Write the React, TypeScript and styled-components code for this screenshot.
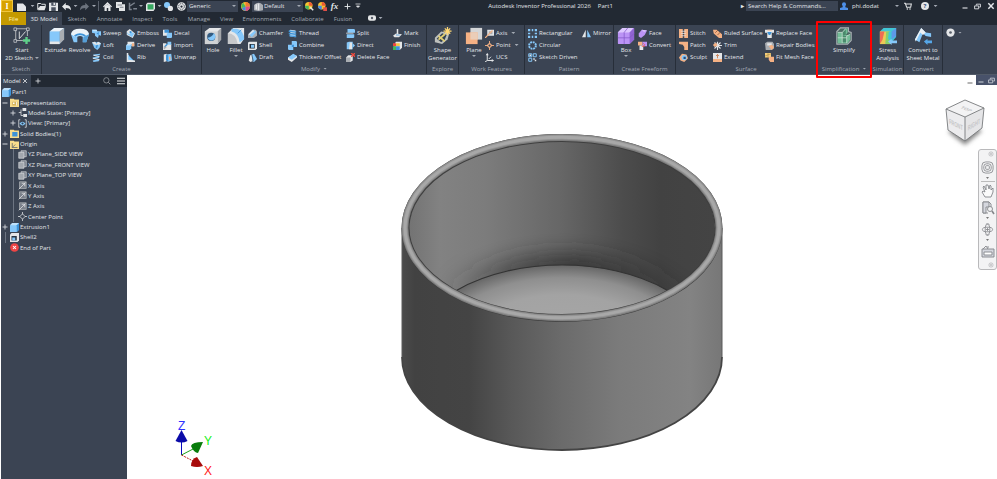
import React from "react";
import styled, { createGlobalStyle } from "styled-components";

const color = {
  bar: "#222933",
  panel: "#3b4453",
  line: "#272e39",
  edge: "#515a68",
  text: "#e3e6ea",
  dim: "#a3a9b3",
  blue: "#86c8fa",
  deep: "#3d93d8",
  white: "#e4e6e8",
  grey: "#a9adb2",
  orange: "#f5b184",
  purple: "#bb93f5",
  green: "#5fd08a",
};

const GlobalStyle = createGlobalStyle`
  * { box-sizing: border-box; }
  body { margin: 0; background: #fff; font-family: "Open Sans", "Noto Sans", sans-serif; font-size: 6px; line-height: 8px; color: ${color.text}; }
  button, input, select { font: inherit; color: inherit; border: 0; padding: 0; margin: 0; background: none; }
  ul { list-style: none; margin: 0; padding: 0; }
  svg { display: block; flex: none; }
`;

/* ---------- icons ---------- */

const { blue: B, deep: D, white: W, grey: G, orange: O, purple: P } = color;

const small: Record<string, React.ReactNode> = {
  sweep: <><path d="M0 1h6l1 2h5v6l-3-1-1 4-4-3V6L0 5z" fill={B} /><path d="M0 1h6l1 2H2z" fill="#c5e5fd" /><path d="M6 6l3-2v4z" fill={D} /></>,
  loft: <><path d="M0 2l4-1 2 1 2-1 4 2-2 6-3 3-4-3z" fill={B} /><path d="M0 2l4-1 2 3 2-3 4 2-3 2H4z" fill={W} /><path d="M5 6l3-1-1 4-2 1z" fill={D} /></>,
  coil: <><path d="M2 2l9-1-1 2-8 1zM1 6l9-2-1 3-7 1zM1 10l9-2-1 3-7 1z" fill={B} /><path d="M2 3l8 2M1 7l9 2" stroke={W} strokeWidth="1.200" /></>,
  emboss: <><path d="M1 3l4-3 7 6-3 6-8-4z" fill={W} /><path d="M1 4l3 3 3-3 4 2-3 5-6-4z" fill={B} /><circle cx="6" cy="4" r="1.500" fill={D} /></>,
  derive: <><path d="M2 1h9v6H7V4H2z" fill={W} /><path d="M0 6l2-2h5v6l-2 2H0z" fill={B} /><path d="M2 4h5l-2 2H0z" fill="#c5e5fd" /><path d="M8 3h3v4H8z" fill={O} /></>,
  rib: <><path d="M2 1v10h9z" fill={B} /><path d="M1 0h2v9l9 1v2H1z" fill={W} /><path d="M4 4l5 5" stroke={D} /></>,
  decal: <><path d="M0 1h7v8H0z" fill={W} /><path d="M2 1h6v4H2z" fill={D} /><path d="M5 6l2-1h5v6l-1 1H5z" fill={B} /></>,
  importFile: <><path d="M0 3h4l1 1h6v8H0z" fill={W} /><path d="M2 8l4-4" stroke={D} strokeWidth="2" /><path d="M6 1h5v4H6z" fill={B} /><path d="M1 7l4 1-3 3H1z" fill={G} /></>,
  unwrap: <><path d="M1 2l4-1v10l-4 1z" fill={W} /><path d="M5 2l6-1 1 9-6 2z" fill={B} /><path d="M4 2l3 1v8l-3-1z" fill={D} /><path d="M8 5h2v4H8z" fill={O} /></>,
  chamfer: <><path d="M0 7l6-6h4l2 2v6l-4 3H0z" fill={G} /><path d="M1 7l6-6 4 3-6 7z" fill={B} /><path d="M1 7l6-6 1 2-6 5z" fill={W} /></>,
  shell: <><path d="M0 2l2-1h10v9l-2 2H0z" fill={W} /><path d="M2 4h7v6H2z" fill="#263342" /><path d="M4 5h4v4H4z" fill={B} /></>,
  draft: <><path d="M1 10l2-7 3-1v9l-3 1z" fill={W} /><path d="M5 2l3-1 4 7-4 4-2-1z" fill={B} /><path d="M5 2l2 9" stroke="#29415a" /></>,
  thread: <><path d="M3 1l7 1v9l-7-1z" fill={W} /><path d="M1 3l10 1M1 6l10 1M2 9l9 1" stroke={D} strokeWidth="2" /><path d="M2 2l8 1M2 8l8 1" stroke={B} /></>,
  combine: <><path d="M5 0h6l1 1v7H5z" fill={B} /><path d="M0 5h7v7H1l-1-1z" fill={B} /><path d="M5 5h3v3H5z" fill={D} /></>,
  thicken: <><path d="M0 6l7-4 5 2v2l-7 6-5-3z" fill={W} /><path d="M0 6l7-5 5 3-7 5z" fill={B} /></>,
  split: <><path d="M2 0h9l1 1v4H2z" fill={B} /><path d="M1 7h10v4l-1 1H1z" fill={B} /><path d="M0 5h10v1H0z" fill={W} /></>,
  direct: <><path d="M1 2l3-1h5v10H1z" fill={B} /><path d="M5 2h3v9H4z" fill={W} /><path d="M9 3l3 3-3 3z" fill={B} /></>,
  deleteFace: <><path d="M0 6l3-3h6v7l-3 2H0z" fill={W} /><path d="M0 6h6v6H0z" fill={G} /><path d="M7 0l5 5M12 0L7 5" stroke="#f04a3e" strokeWidth="1.800" /></>,
  mark: <><path d="M5 0h2v7H5z" fill={W} /><path d="M0 9l4-3 8 1-4 4H2z" fill={W} /><path d="M4 8h5" stroke={D} /></>,
  finish: <><path d="M4 1h8v8l-3 3H2V4z" fill={W} /><path d="M0 3h4v4H0z" fill="#f0443e" /><path d="M4 3h5v4H4z" fill="#f2c545" /><path d="M0 7h4v5H0z" fill="#44b65b" /><path d="M4 7h5v5H4z" fill="#3c91e0" /></>,
  axis: <><path d="M3 1h9v8H3z" fill={W} /><path d="M5 3h5v4H5z" fill={G} /><path d="M0 12L10 2" stroke={O} strokeWidth="1.600" /></>,
  point: <><path d="M6 0v12M0 6h12" stroke={O} strokeWidth="1.200" /><path d="M6 2l4 4-4 4-4-4z" fill={O} /><circle cx="6" cy="6" r="1.500" fill={color.panel} /></>,
  ucs: <><path d="M3 1v9h8M3 10L0 12M5 8l3-3" stroke={W} strokeWidth="1.300" fill="none" /><path d="M1 3l2-3 2 3M9 8l3 2-3 2" fill={W} /></>,
  rect: <path d="M0 0h3v3H0zM5 0h2v3H5zM9 0h3v3H9zM0 5h3v2H0zM9 5h3v2H9zM0 9h3v3H0zM5 9h2v3H5zM9 9h3v3H9z" fill={B} />,
  circular: <circle cx="6" cy="6" r="4.500" stroke={B} strokeWidth="2.600" strokeDasharray="2.500 1" fill="none" />,
  driven: <><path d="M1 1h4v4H1zM7 1h4v4H7zM1 7h4v4H1z" stroke={B} strokeWidth="1.300" fill="none" /><path d="M7 7h2v2H7zM9 9h2v2H9zM2 2h2v2H2z" fill={W} /></>,
  mirror: <><path d="M5 1v10H0z" fill={W} /><path d="M7 1v10h5z" fill={B} /></>,
  face: <><path d="M1 6l4-5 7 1-3 6-5 4-3-2z" fill={P} /><path d="M5 1l7 1-4 2z" fill="#d9c3fb" /></>,
  convert: <><path d="M0 1h6v5H0z" fill={O} /><path d="M6 1h6v6H6z" fill={P} /><path d="M2 6h5v6H2z" fill={W} /><path d="M7 3l2 2-2 2M5 7h4" stroke="#ef5141" fill="none" /></>,
  stitch: <><path d="M0 0h5v12H0zM7 0h5v12H7z" fill={O} /><path d="M3 3h6M3 6h6M3 9h6" stroke={W} /></>,
  patch: <path d="M0 1h12v11H7V8L5 5 0 4z" fill={O} />,
  sculpt: <><path d="M0 6l4-5 6 1 2 5-5 5-5-2z" fill={O} /><circle cx="7" cy="6" r="3.500" fill={B} /><path d="M6 5h3v3H6z" fill="#2c4a78" /></>,
  ruled: <><path d="M0 1h5l7 6v5H8L1 6z" fill={O} /><path d="M3 5l4-4M6 8l4-4" stroke="#7d5138" /></>,
  trim: <><path d="M6 1v11M1 6h11M2 2l8 8M10 2l-8 8" stroke={W} strokeWidth="1.500" /><path d="M0 5l4-3 2 4-4 2z" fill={O} /></>,
  extend: <><path d="M0 0h12v8H0z" fill={W} /><path d="M0 8h12v4H0z" fill={O} /><path d="M6 2v5M4 4l2-2 2 2" stroke="#c96c38" fill="none" /></>,
  replace: <><path d="M0 1h12v4H9v7H3V5H0z" fill={W} /><path d="M3 4h6L7 8H5z" fill={D} /><path d="M3 1h6v1H3z" fill={O} /></>,
  repair: <><path d="M0 3l3-2h7l2 3v6l-3 2H1z" fill={G} /><path d="M3 3h6v3H3z" fill={W} /><path d="M5 7l4-2 3 3-3 4z" fill={O} /></>,
  mesh: <><path d="M0 0h8v6H0z" fill="#f3ce79" /><path d="M5 5h7v7H7L5 9z" fill={O} /><path d="M0 4l8-3M4 0v6" stroke="#8e6d37" strokeWidth=".6" /></>,
  newFile: <path d="M0 2h8l4 4v6H0z" fill={W} />,
  open: <><path d="M1 2h4l1 1h5v3H4l-3 4z" fill="none" stroke={W} strokeWidth="1.300" /><path d="M4 6h8l-2 5H1z" fill={W} /></>,
  save: <><path d="M0 1h12v11H0z" fill={W} /><path d="M3 1h6v4H3zM3 7h6v5H3z" fill="#4a5260" /><path d="M6 1h2v3H6z" fill={W} /></>,
  undo: <path d="M0 6l5-5v3q7 0 7 7-2-3-7-3v3z" fill={W} />,
  redo: <path d="M12 6L7 1v3Q0 4 0 11q2-3 7-3v3z" fill="#6b727d" />,
  home: <><path d="M0 6l6-6 6 6-1 1-5-4-5 4z" fill={W} /><path d="M2 6l4-3 4 3v6H7V8H5v4H2z" fill={W} /></>,
  sheets: <><path d="M0 0h8v3h4v9H4V8H0z" fill={W} /><path d="M2 4h6M5 7h5" stroke="#59606b" /></>,
  branch: <path d="M2 1v9h3M3 5l6-4M7 9h5" stroke="#7b828d" strokeWidth="2" fill="none" />,
  region: <><path d="M0 3l2-2h10v8l-2 3H0z" fill={W} /><path d="M2 3h8v7H2z" fill="#36a860" /></>,
  spheres: <><circle cx="4" cy="4" r="4" fill={B} /><circle cx="8.500" cy="8.500" r="3.500" fill={W} /></>,
  gear: <><circle cx="6" cy="6" r="5.800" fill={W} /><circle cx="6" cy="6" r="3.800" fill="none" stroke={color.bar} strokeDasharray="2 1" /><circle cx="6" cy="6" r="1.500" fill={color.bar} /></>,
  wheel: <><circle cx="6" cy="6" r="6" fill="#f4c430" /><path d="M6 6V0a6 6 0 0 1 6 6z" fill="#ee7b36" /><path d="M6 6h6a6 6 0 0 1-6 6z" fill="#d84c8d" /><path d="M6 6v6A6 6 0 0 1 1 8z" fill="#4389e8" /><path d="M6 6L1 8a6 6 0 0 1 2-7z" fill="#46b85e" /></>,
  cylinder: <><path d="M0 4q6-6 12 0v7q-6 2-12 0z" fill={G} /><path d="M3 3v7M6 2v9" stroke={W} strokeWidth="2" /></>,
  wheelX: <><circle cx="5" cy="5" r="5" fill="#f4c430" /><path d="M5 5V0a5 5 0 0 1 5 5z" fill="#ee5b36" /><path d="M5 5v5a5 5 0 0 1-5-5z" fill="#4389e8" /><path d="M7 7h5v5H7z" fill="#e05048" /></>,
  wheelPick: <><circle cx="5" cy="5" r="5" fill="#f4c430" /><path d="M5 5V0a5 5 0 0 1 5 5z" fill="#ee5b36" /><path d="M5 5v5a5 5 0 0 1-5-5z" fill="#46b85e" /><path d="M7 7l4 4" stroke={W} strokeWidth="2" /></>,
  plus: <path d="M6 1v10M1 6h10" stroke="currentColor" strokeWidth="1.600" />,
  minus: <path d="M1 6h10" stroke="currentColor" strokeWidth="1.800" />,
  menuDown: <path d="M1 2h10M3 6h6L6 9z" stroke={W} strokeWidth="1.500" fill={W} />,
  user: <><circle cx="6" cy="3.500" r="3" fill="#4d8fe8" /><path d="M4 5h4v3l4 1v3H0V9l4-1z" fill="#4d8fe8" /></>,
  cart: <><path d="M0 2h2l2 6h6l1-5H3" stroke={W} strokeWidth="1.600" fill="none" /><circle cx="5" cy="10.500" r="1.200" fill={W} /><circle cx="9" cy="10.500" r="1.200" fill={W} /></>,
  minimize: <path d="M1 10h10" stroke="currentColor" strokeWidth="2.200" />,
  restore: <path d="M4 4V2h7v5H9M1 5h7v5H1z" stroke="currentColor" strokeWidth="1.500" fill="none" />,
  close: <path d="M2 2l8 8M10 2l-8 8" stroke="currentColor" strokeWidth="2.200" />,
  thinClose: <path d="M2 2l8 8M10 2l-8 8" stroke="currentColor" strokeWidth="1.600" />,
  search: <><circle cx="5" cy="5" r="4" stroke={G} fill="none" /><path d="M8 8l3 3" stroke={G} strokeWidth="1.200" /></>,
  burger: <path d="M0 2h12M0 6h12M0 10h12" stroke={W} strokeWidth="1.600" />,
  part: <><path d="M0 3l3-3h9v9l-3 3H0z" fill={B} /><path d="M0 3l3-3h9L9 3z" fill="#bfe1fb" /><path d="M9 3l3-3v9l-3 3z" fill={D} /></>,
  folder: <><path d="M0 1h5l1 1h6v10H0z" fill="#f7dc8c" /><path d="M3 5h7v5H3z" fill="#d3b35d" /><path d="M4 6h2v2H4zM8 5h1v5H8z" fill="#fff" /></>,
  solids: <><path d="M0 1h5l1 1h6v10H0z" fill="#f7dc8c" /><path d="M3 4h7v6H3z" fill={D} /></>,
  origin: <><path d="M0 1h5l1 1h6v10H0z" fill="#f7dc8c" /><path d="M3 4v6h7M3 10l4-4" stroke="#55616d" fill="none" /></>,
  state: <><path d="M4 2v8h3M1 6h3" stroke={W} fill="none" /><path d="M6 0h5v4H6zM7 8h5v4H7z" fill={W} /></>,
  view: <><path d="M3 1H1v10h2M9 1h2v10H9" stroke={W} fill="none" /><path d="M2 6q4-5 8 0q-4 5-8 0" fill={B} /><circle cx="6" cy="6" r="1.400" fill="#2e4055" /></>,
  plane: <><path d="M4 1h7v8H4z" fill="#777e89" stroke={W} strokeWidth=".8" /><path d="M1 3h7v8H1z" fill="#a2a7ae" stroke={W} strokeWidth=".8" /></>,
  treeAxis: <><path d="M2 1h9v9H2z" fill="#7b818b" stroke={G} /><path d="M1 11l9-9M5 3h4v4" stroke={W} fill="none" /></>,
  center: <><path d="M6 0v12M0 6h12" stroke={W} /><path d="M6 2.500L9.500 6 6 9.500 2.500 6z" fill={color.panel} stroke={W} /></>,
  shellTree: <><path d="M0 2l2-2h10v10l-2 2H0z" fill={W} /><path d="M2 4h7v6H2z" fill="#263342" /><path d="M3 6h4v4H3z" fill={B} /></>,
  end: <><circle cx="6" cy="6" r="5.800" fill="#ef4444" /><path d="M4 4l4 4M8 4L4 8" stroke="#fff" strokeWidth="1.400" /></>,
  more: <><circle cx="6" cy="6" r="5.500" fill={W} /><circle cx="6" cy="6" r="1.800" fill="#59606b" /></>,
  tabMenu: <><rect x="0" y="2" width="12" height="8" rx="3" fill={W} /><circle cx="6" cy="6" r="1.800" fill="#59606b" /></>,
};

const large: Record<string, React.ReactNode> = {
  sketch: <><path d="M3 2h13M3 2v13M16 2v8M3 15h8" stroke={G} strokeWidth="1.200" fill="none" /><path d="M1 1h3v3H1zM15 1h3v3h-3zM1 14h3v3H1z" fill={color.panel} stroke={W} strokeWidth=".7" /><path d="M7 13L14 5M7 5v8" stroke={W} fill="none" /><path d="M15 11v8M11 15h8" stroke={color.green} strokeWidth="2.600" /></>,
  extrude: <><path d="M3 5l5-4h11v12l-5 6H3z" fill="#56a7e8" /><path d="M3 5h11v11H3z" fill={B} /><path d="M3 5l5-4h11l-5 4z" fill="#eef3f7" /><path d="M14 5l5-4v13l-5 5z" fill={G} /><path d="M3 16h11v3H3z" fill={W} /></>,
  revolve: <><path d="M0 8q1-5 10-5t10 5l-3 9h-4v-6q-3-2-6 0v6H3z" fill={B} /><path d="M0 8q1-6 10-6t10 6l-5 3q-5-3-10 0z" fill="#ecf3f8" /><path d="M4 10q6-4 12 0" stroke={D} fill="none" strokeWidth="2" /><path d="M14 11l6-3-3 9h-4z" fill="#559fd8" /></>,
  hole: <><path d="M1 5l5-4h13v13l-4 5H1z" fill={W} /><path d="M15 5l4-4v13l-4 5z" fill="#a3a6aa" /><path d="M1 5h14v14H1z" fill="#d0d2d4" /><circle cx="8" cy="11" r="4.500" fill="#335b80" /><path d="M4 12q5-1 7-5a4.500 4.500 0 1 1-7 5" fill={B} /></>,
  fillet: <><path d="M1 7l6-6h12v12l-4 6H1z" fill={W} /><path d="M1 7q9 0 11 12H1z" fill="#c5c7ca" /><path d="M5 2h6q8 2 8 12l-5 3Q13 7 5 5z" fill={B} /><path d="M12 7l4-4" stroke={D} /></>,
  shape: <><path d="M1 12l7-7 9 2-2 7-6 5-8-2z" fill="#bdc0bd" /><path d="M3 13l6-6 5 2-2 5-4 3z" fill="#344253" /><path d="M5 14l7-6M5 10l7 6" stroke="#e3cf73" strokeWidth="2" /><path d="M15 0v9M10.500 4.500h9M12 1.500l6 6M18 1.500l-6 6" stroke="#ffd774" strokeWidth="1.400" /></>,
  planeBig: <><path d="M6 1h13v13H6z" fill="#d5d6d8" /><path d="M1 6h13v13H1z" fill={O} /><path d="M6 6h8v8H6z" fill="#ebcdb8" /></>,
  box: <><path d="M1 6q0-1 5-5h12q1 0 1 1v12l-5 5H2q-1 0-1-1z" fill={P} /><path d="M1 6l5-5h12l-4 5z" fill="#ddc8ff" /><path d="M14 6l5-5v13l-5 5z" fill="#9064d2" /><path d="M8 6v13M1 12h13l5-5M8 6l4-5" stroke="#8358c8" strokeWidth=".8" fill="none" /></>,
  simplify: <><path d="M2 5l4-4h9v4l3 1v9l-4 4H2z" fill="#4b6b63" stroke="#aab2b6" strokeWidth="1.200" /><path d="M3 6h5l3-4h3v4l-2 3h5v5l-3 4H3z" fill="#74bd98" /><path d="M8 6l4-4v7l-4 1zM8 10h5v7H8z" fill="#4a8a6c" /><path d="M3 6h5v12M3 12h10M13 10v8M8 6l4-4M13 10l4-2" stroke="#cfe6da" strokeWidth=".8" fill="none" /></>,
  stress: <><path d="M1 5l4-4h14v10l-5 6H1z" fill="#41c7d6" /><path d="M1 5h12v14H1z" fill="#edca56" /><path d="M1 5h5l-2 9-3 5z" fill="#ee6c55" /><path d="M8 5h5v14H7z" fill="#87d16b" /><path d="M11 5h3v12l-4-4z" fill="#41c7d6" /><path d="M14 5l5-4v9l-5 4z" fill="#5e99e9" /><path d="M10 16l4-3v2h6v3h-6v2z" fill={B} /></>,
  sheet: <><path d="M1 14L8 1l5 5 6 1v4l-6-1-3-3-4 10z" fill={B} /><path d="M8 1l5 5-3 3-3-3-5 10-1-2z" fill="#eef1f3" /><path d="M11 16l4-3v2h5v3h-5v2z" fill="#56a7e8" /></>,
};

function Icon({ name, size = 9 }: { name: string; size?: number }) {
  return <svg width={size} height={size} viewBox="0 0 12 12" aria-hidden="true">{small[name]}</svg>;
}
function LargeIcon({ name }: { name: string }) {
  return <svg width="18" height="18" viewBox="0 0 20 20" aria-hidden="true">{large[name]}</svg>;
}
const Caret = styled.i`
  flex: none;
  width: 4px;
  height: 2px;
  background: ${color.dim};
  clip-path: polygon(0 0, 100% 0, 50% 100%);
`;

/* ---------- frame ---------- */

const Window = styled.div`
  display: flex;
  flex-direction: column;
  min-height: 100vh;
  padding-left: 1px;
`;
const TitleBar = styled.header`
  display: flex;
  align-items: center;
  height: 12px;
  background: ${color.bar};
`;
const AppButton = styled.button`
  width: 12px;
  height: 12px;
  background: #d8a200;
  border: 1px solid #f0c53d;
  color: #fff;
  font-family: "Liberation Serif", serif;
  font-size: 8px;
  line-height: 9px;
  font-weight: 700;
`;
const IconButton = styled.button<{ $w: number }>`
  display: flex;
  align-items: center;
  justify-content: center;
  gap: 3px;
  flex: none;
  width: ${(p) => p.$w}px;
  height: 12px;
  font-weight: 700;
`;
const FormulaMark = styled.em`
  font-family: "Liberation Serif", serif;
  font-size: 9px;
`;
const BarRule = styled.span`
  width: 1px;
  height: 10px;
  margin: 0 1px;
  background: #5a616c;
`;
const Picker = styled.label<{ $w: number }>`
  display: flex;
  align-items: center;
  gap: 1px;
  flex: none;
  width: ${(p) => p.$w}px;
  height: 11px;
  padding: 0 2px;
  background: ${color.panel};
`;
const PickerSelect = styled.select`
  appearance: none;
  flex: 1;
  min-width: 0;
`;
const Title = styled.h1`
  flex: 1;
  display: flex;
  justify-content: center;
  gap: 7px;
  margin: 0;
  font-size: 6px;
  font-weight: 400;
  white-space: nowrap;
`;
const SearchBox = styled.input`
  width: 92px;
  height: 10px;
  padding: 0 2px;
  background: ${color.panel};
  &::placeholder { color: ${color.text}; opacity: 1; }
`;
const UserButton = styled.button`
  display: flex;
  align-items: center;
  gap: 4px;
  width: 61px;
  padding-left: 2px;
  & > ${Caret} { margin-left: auto; }
`;
const HelpMark = styled.span`
  width: 8px;
  height: 8px;
  border-radius: 4px;
  background: ${W};
  color: #344d78;
`;
const WindowControls = styled.div`
  display: flex;
  margin-left: 20px;
`;

const Tabs = styled.nav`
  display: flex;
  height: 13px;
  background: ${color.bar};
`;
const Tab = styled.button<{ $w: number; $kind?: "file" | "active" }>`
  flex: none;
  width: ${(p) => p.$w}px;
  text-align: center;
  white-space: nowrap;
  color: ${(p) => (p.$kind === "file" ? "#fff3bd" : p.$kind === "active" ? color.text : color.dim)};
  background: ${(p) => (p.$kind === "file" ? "#c59a00" : p.$kind === "active" ? color.panel : "none")};
`;

/* ---------- ribbon ---------- */

const RibbonBar = styled.div`
  display: flex;
  height: 50px;
  background: ${color.panel};
  border-bottom: 1px solid ${color.edge};
`;
const PanelBox = styled.section<{ $w: number; $marked?: boolean }>`
  position: relative;
  display: flex;
  flex-direction: column;
  flex: none;
  width: ${(p) => p.$w}px;
  padding-top: 2px;
  border-right: 1px solid ${color.line};
  ${(p) => p.$marked && `&::after { content: ""; position: absolute; inset: -4px -1px -4px -1px; border: 2px solid #f00; border-radius: 1px; z-index: 1; }`}
`;
const PanelBody = styled.div<{ $cols: string; $pad: number }>`
  display: grid;
  grid-template-columns: ${(p) => p.$cols};
  height: 36px;
  padding-left: ${(p) => p.$pad}px;
`;
const PanelName = styled.h2`
  display: flex;
  align-items: center;
  justify-content: center;
  gap: 3px;
  height: 11px;
  margin: 0;
  font-size: 6px;
  font-weight: 400;
  color: ${color.dim};
  white-space: nowrap;
`;
const ToolColumn = styled.div`
  display: grid;
  grid-template-rows: repeat(3, 12px);
  justify-items: start;
`;
const Tool = styled.button`
  display: flex;
  align-items: center;
  gap: 2px;
  white-space: nowrap;
  & > ${Caret} { margin-left: 2px; }
`;
const BigTool = styled.button`
  display: flex;
  flex-direction: column;
  align-items: center;
  white-space: nowrap;
  height: 36px;
  & > ${Caret} { margin-top: 1px; }
`;
const BigLines = styled.span`
  display: flex;
  flex-direction: column;
  align-items: center;
  padding-top: 1px;
  span { display: flex; align-items: center; gap: 2px; }
`;

type Item = [icon: string, label: string, caret?: boolean];
type Big = { big: string; lines: string[]; caret?: "below" | "inline" };
type Panel = { name: string; w: number; pad: number; cols: string; marked?: boolean; menu?: boolean; content: (Item[] | Big)[] };

const panels: Panel[] = [
  { name: "Sketch", w: 41, pad: 2, cols: "38px", content: [{ big: "sketch", lines: ["Start", "2D Sketch"], caret: "inline" }] },
  { name: "Create", w: 160, pad: 2, cols: "23px 25px 34px 37px 34px", content: [
    { big: "extrude", lines: ["Extrude"] }, { big: "revolve", lines: ["Revolve"] },
    [["sweep", "Sweep"], ["loft", "Loft"], ["coil", "Coil"]],
    [["emboss", "Emboss"], ["derive", "Derive"], ["rib", "Rib"]],
    [["decal", "Decal"], ["importFile", "Import"], ["unwrap", "Unwrap"]],
  ] },
  { name: "Modify", w: 225, pad: 0, cols: "22px 24px 40px 58px 47px 33px", menu: true, content: [
    { big: "hole", lines: ["Hole"] }, { big: "fillet", lines: ["Fillet"], caret: "below" },
    [["chamfer", "Chamfer"], ["shell", "Shell"], ["draft", "Draft"]],
    [["thread", "Thread"], ["combine", "Combine"], ["thicken", "Thicken/ Offset"]],
    [["split", "Split"], ["direct", "Direct"], ["deleteFace", "Delete Face"]],
    [["mark", "Mark"], ["finish", "Finish"]],
  ] },
  { name: "Explore", w: 32, pad: 0, cols: "31px", content: [{ big: "shape", lines: ["Shape", "Generator"] }] },
  { name: "Work Features", w: 66, pad: 4, cols: "22px 36px", content: [
    { big: "planeBig", lines: ["Plane"], caret: "below" },
    [["axis", "Axis", true], ["point", "Point", true], ["ucs", "UCS"]],
  ] },
  { name: "Pattern", w: 89, pad: 3, cols: "54px 30px", content: [
    [["rect", "Rectangular"], ["circular", "Circular"], ["driven", "Sketch Driven"]], [["mirror", "Mirror"]],
  ] },
  { name: "Create Freeform", w: 62, pad: 0, cols: "24px 36px", content: [
    { big: "box", lines: ["Box"], caret: "below" }, [["face", "Face"], ["convert", "Convert"]],
  ] },
  { name: "Surface", w: 141, pad: 3, cols: "34px 52px 50px", content: [
    [["stitch", "Stitch"], ["patch", "Patch"], ["sculpt", "Sculpt"]],
    [["ruled", "Ruled Surface"], ["trim", "Trim"], ["extend", "Extend"]],
    [["replace", "Replace Face"], ["repair", "Repair Bodies"], ["mesh", "Fit Mesh Face"]],
  ] },
  { name: "Simplification", w: 55, pad: 0, cols: "54px", marked: true, menu: true, content: [{ big: "simplify", lines: ["Simplify"] }] },
  { name: "Simulation", w: 32, pad: 0, cols: "31px", content: [{ big: "stress", lines: ["Stress", "Analysis"] }] },
  { name: "Convert", w: 39, pad: 0, cols: "38px", content: [{ big: "sheet", lines: ["Convert to", "Sheet Metal"] }] },
];

const RibbonMore = styled.button`
  display: flex;
  align-items: center;
  gap: 3px;
  height: 15px;
  margin-left: 3px;
`;

function Ribbon() {
  return (
    <RibbonBar>
      {panels.map((p) => (
        <PanelBox key={p.name} $w={p.w} $marked={p.marked}>
          <PanelBody $cols={p.cols} $pad={p.pad}>
            {p.content.map((c) =>
              Array.isArray(c) ? (
                <ToolColumn key={c[0][1]}>
                  {c.map(([icon, label, caret]) => (
                    <Tool key={label}><Icon name={icon} />{label}{caret && <Caret />}</Tool>
                  ))}
                </ToolColumn>
              ) : (
                <BigTool key={c.big}>
                  <LargeIcon name={c.big} />
                  <BigLines>
                    {c.lines.map((l, i) => <span key={l}>{l}{c.caret === "inline" && i === 1 && <Caret />}</span>)}
                  </BigLines>
                  {c.caret === "below" && <Caret />}
                </BigTool>
              )
            )}
          </PanelBody>
          <PanelName>{p.name}{p.menu && <Caret />}</PanelName>
        </PanelBox>
      ))}
      <RibbonMore aria-label="Ribbon display options"><Icon name="more" /><Caret /></RibbonMore>
    </RibbonBar>
  );
}

/* ---------- model browser ---------- */

const Work = styled.div`
  display: flex;
  flex: 1;
`;
const Browser = styled.aside`
  flex: none;
  width: 126px;
  background: ${color.panel};
`;
const BrowserHead = styled.div`
  display: flex;
  height: 12px;
  background: ${color.bar};
`;
const BrowserTab = styled.button`
  display: flex;
  align-items: center;
  justify-content: space-between;
  width: 30px;
  padding: 0 3px 0 2px;
  background: ${color.panel};
`;
const Spacer = styled.span`
  flex: 1;
`;
const Tree = styled.ul`
  display: grid;
  grid-auto-rows: 1fr;
  height: 166px;
`;
const TreeRow = styled.li<{ $depth: number }>`
  display: flex;
  align-items: center;
  gap: 1px;
  padding-left: ${(p) => [1, 1, 9, 9][p.$depth]}px;
`;
const Toggle = styled.span<{ $line?: boolean }>`
  display: flex;
  flex: none;
  align-items: center;
  width: 7px;
  align-self: stretch;
  background: ${(p) => (p.$line ? "linear-gradient(#6d7582, #6d7582) 3px 0 / 1px 100% no-repeat" : "none")};
`;
const TreeItem = styled.button`
  display: flex;
  align-items: center;
  gap: 1px;
  white-space: nowrap;
`;

type Node = [depth: number, mark: "" | "+" | "-" | "|", icon: string, label: string];
const nodes: Node[] = [
  [0, "", "part", "Part1"],
  [1, "-", "folder", "Representations"],
  [2, "+", "state", "Model State: [Primary]"],
  [2, "+", "view", "View: [Primary]"],
  [1, "+", "solids", "Solid Bodies(1)"],
  [1, "-", "origin", "Origin"],
  [3, "|", "plane", "YZ Plane_SIDE VIEW"],
  [3, "|", "plane", "XZ Plane_FRONT VIEW"],
  [3, "|", "plane", "XY Plane_TOP VIEW"],
  [3, "|", "treeAxis", "X Axis"],
  [3, "|", "treeAxis", "Y Axis"],
  [3, "|", "treeAxis", "Z Axis"],
  [3, "|", "center", "Center Point"],
  [1, "+", "part", "Extrusion1"],
  [1, "|", "shellTree", "Shell2"],
  [1, "", "end", "End of Part"],
];

function ModelBrowser() {
  return (
    <Browser>
      <BrowserHead>
        <BrowserTab>Model<Icon name="thinClose" size={6} /></BrowserTab>
        <IconButton $w={13} aria-label="Add tab"><Icon name="plus" size={6} /></IconButton>
        <Spacer />
        <IconButton $w={14} aria-label="Search"><Icon name="search" size={8} /></IconButton>
        <IconButton $w={13} aria-label="Browser menu"><Icon name="burger" size={8} /></IconButton>
      </BrowserHead>
      <Tree>
        {nodes.map(([depth, mark, icon, label]) => (
          <TreeRow key={label} $depth={depth}>
            {depth > 0 && (
              <Toggle $line={mark === "|"}>
                {(mark === "+" || mark === "-") && <Icon name={mark === "+" ? "plus" : "minus"} size={6} />}
              </Toggle>
            )}
            <TreeItem><Icon name={icon} />{label}</TreeItem>
          </TreeRow>
        ))}
      </Tree>
    </Browser>
  );
}

/* ---------- viewport ---------- */

const Viewport = styled.main`
  position: relative;
  flex: 1;
  display: flex;
  justify-content: center;
  align-items: flex-start;
  padding-top: 59px;
  background: #fff;
`;
const DocControls = styled.div`
  position: absolute;
  top: 0;
  right: 0;
  display: flex;
  color: #777;
`;
const DocDark = styled.div`
  display: flex;
  height: 10px;
  align-items: center;
  background: #48526a;
  color: #c4c8d0;
`;
const CubeHolder = styled.div`
  position: absolute;
  top: 23px;
  right: 11px;
`;
const TriadHolder = styled.div`
  position: absolute;
  left: 46px;
  bottom: 0;
`;
const NavBar = styled.div`
  position: absolute;
  top: 74px;
  right: 0;
  display: flex;
  flex-direction: column;
  align-items: center;
  width: 19px;
  height: 121px;
  background: #f3f3f4;
  border: 1px solid #b9b9bb;
  border-radius: 3px;
`;
const NavButton = styled.button<{ $h: number }>`
  display: flex;
  align-items: center;
  justify-content: center;
  width: 17px;
  height: ${(p) => p.$h}px;
`;
const NavCaret = styled(Caret)`
  width: 3px;
  background: #777;
  margin: 1px 0 2px;
`;
const NavRule = styled.hr`
  width: 14px;
  margin: 0;
  border: 0;
  border-top: 1px solid #bbb;
`;

function Bowl() {
  return (
    <svg width="322" height="318" viewBox="0 0 322 318" role="img" aria-label="Shelled cylinder">
      <defs>
        <linearGradient id="outer">
          <stop offset="0" stopColor="#4b4b4b" /><stop offset=".04" stopColor="#424242" /><stop offset=".21" stopColor="#444" />
          <stop offset=".34" stopColor="#585858" /><stop offset=".5" stopColor="#6b6b6b" /><stop offset=".68" stopColor="#7b7b7b" />
          <stop offset=".9" stopColor="#838383" /><stop offset="1" stopColor="#777" />
        </linearGradient>
        <linearGradient id="inner">
          <stop offset="0" stopColor="#737373" /><stop offset=".1" stopColor="#828282" /><stop offset=".25" stopColor="#7c7c7c" />
          <stop offset=".5" stopColor="#666" /><stop offset=".7" stopColor="#4c4c4c" /><stop offset=".82" stopColor="#424242" /><stop offset="1" stopColor="#444" />
        </linearGradient>
        <linearGradient id="cove">
          <stop offset=".1" stopColor="#2c2c2c" stopOpacity="0" /><stop offset=".35" stopColor="#2c2c2c" stopOpacity=".6" />
          <stop offset=".55" stopColor="#2c2c2c" stopOpacity=".9" /><stop offset=".8" stopColor="#2c2c2c" stopOpacity=".3" /><stop offset="1" stopColor="#2c2c2c" stopOpacity="0" />
        </linearGradient>
        <radialGradient id="floor">
          <stop offset="0" stopColor="#a8a8a8" /><stop offset=".65" stopColor="#a3a3a3" /><stop offset=".85" stopColor="#8f8f8f" /><stop offset="1" stopColor="#666" />
        </radialGradient>
        <filter id="soft" x="-20%" y="-30%" width="140%" height="160%"><feGaussianBlur stdDeviation="10" /></filter>
        <clipPath id="mouth"><ellipse cx="161" cy="94" rx="153" ry="87.500" /></clipPath>
      </defs>
      <path d="M1 94V223A160 93 0 0 0 321 223V94Z" fill="url(#outer)" />
      <path d="M1 223A160 93 0 0 0 321 223" fill="none" stroke="#444" strokeWidth="1.800" />
      <path d="M1 94V223M321 94V223" stroke="#5b5b5b" />
      <ellipse cx="161" cy="94" rx="153" ry="87.500" fill="url(#inner)" />
      <g clipPath="url(#mouth)">
        <ellipse cx="161" cy="216" rx="148" ry="83" fill="none" stroke="url(#cove)" strokeWidth="24" filter="url(#soft)" />
        <ellipse cx="161" cy="216" rx="148" ry="85" fill="url(#floor)" stroke="#333" strokeWidth="1.200" />
      </g>
      <g fill="none">
        <ellipse cx="161" cy="94" rx="156.500" ry="90" stroke="#3f3f3f" strokeWidth="8" />
        <ellipse cx="161" cy="93.700" rx="157" ry="90.200" stroke="#7d7d7d" strokeWidth="6.800" />
        <ellipse cx="161" cy="93.500" rx="157" ry="90.200" stroke="#959595" strokeWidth="5" />
        <ellipse cx="161" cy="93.500" rx="157" ry="90.200" stroke="#a8a8a8" strokeWidth="3" />
      </g>
    </svg>
  );
}

const CubeLabel = styled.text`
  font: 700 8px "Liberation Sans", sans-serif;
  fill: #c5c5c7;
  text-anchor: middle;
`;

function ViewCube() {
  return (
    <svg width="42" height="52" viewBox="0 0 42 52" role="img" aria-label="View cube">
      <defs><filter id="cubeShadow" x="-30%" y="-30%" width="160%" height="160%"><feGaussianBlur stdDeviation="2" /></filter></defs>
      <path d="M4 34L21 47 38 33 21 22z" fill="#888" filter="url(#cubeShadow)" />
      <path d="M2 11L21 2 40 10 21 19z" fill="#f3f3f4" />
      <path d="M2 11L21 19V43L4 32z" fill="#ececee" />
      <path d="M40 10L21 19V43L38 30z" fill="#e5e5e7" />
      <path d="M2 11L21 2 40 10 38 30 21 43 4 32zM2 11L21 19 40 10M21 19V43" fill="none" stroke="#77797c" strokeWidth=".9" />
      <CubeLabel transform="matrix(.6 .25 -.5 .35 21 12)">TOP</CubeLabel>
      <CubeLabel transform="matrix(.5 .26 .05 .9 12 29)">FRONT</CubeLabel>
      <CubeLabel transform="matrix(.5 -.3 0 .9 30 29)">RIGHT</CubeLabel>
    </svg>
  );
}

const AxisLetter = styled.text`
  font: 12px "Liberation Sans", sans-serif;
`;

function Triad() {
  return (
    <svg width="44" height="62" viewBox="0 0 44 62" role="img" aria-label="Axis triad">
      <path d="M8.500 38V20" stroke="#0a0ac0" />
      <path d="M8.500 38L22 31" stroke="#1ba01b" />
      <path d="M8.500 38L22 45" stroke="#c02020" strokeDasharray="2 1" />
      <path d="M8.500 13L14.500 24Q8.500 27 2.500 24z" fill="#0b0ba8" />
      <path d="M30 25L25 36Q21 36 18 29 19 25 30 25z" fill="#087c0c" />
      <path d="M30 49L24 40Q18 42 18 49 24 51 30 49z" fill="#a80b0b" />
      <AxisLetter x="5" y="13" fill="#3030ff">Z</AxisLetter>
      <AxisLetter x="31" y="28" fill="#18f018">Y</AxisLetter>
      <AxisLetter x="31" y="58" fill="#ff2020">X</AxisLetter>
    </svg>
  );
}

const navArt: Record<string, React.ReactNode> = {
  wheel: <><rect x="1" y="1" width="12" height="12" rx="4" /><rect x="3" y="3" width="8" height="8" rx="3" /><rect x="5" y="5" width="4" height="4" rx="1" /></>,
  hand: <path d="M4 13L1 8l1-1 2 1-2-5 1-1 2 4L5 1h2l1 4 1-4 1 1v4l2-2v4l-2 5z" fill="#fafafa" />,
  zoom: <><path d="M2 1h6l2 2v3M2 1v11h5" /><path d="M2 1h6v5H5v6H2z" fill="#d5d7de" /><circle cx="9" cy="8" r="2.500" fill="#f3f3f4" /><path d="M11 10l2 3" strokeWidth="1.600" /></>,
  orbit: <><ellipse cx="7" cy="7" rx="5.500" ry="2.500" /><ellipse cx="7" cy="7" rx="2.500" ry="5.500" /><path d="M7 5v4M5 7h4M5 2l2-2 2 2M5 12l2 2 2-2" /></>,
  look: <><path d="M1 4h12v8H1z" fill="#d5d7de" /><path d="M3 7h8v3H3z" fill="#fff" /><path d="M2 4l3-3 2 3M7 1v2" /></>,
  dot: <><circle cx="7" cy="7" r="5" /><circle cx="7" cy="7" r="2" /></>,
};
function NavIcon({ name, size = 14 }: { name: string; size?: number }) {
  return <svg width={size} height={size} viewBox="0 0 14 14" fill="none" stroke="#85878b" strokeWidth=".9" aria-hidden="true">{navArt[name]}</svg>;
}
const NavCorner = styled(NavButton)`
  justify-content: flex-end;
  padding-right: 2px;
`;

function Canvas() {
  return (
    <Viewport>
      <Bowl />
      <DocControls>
        <IconButton $w={12} aria-label="Minimize document"><Icon name="minimize" size={6} /></IconButton>
        <DocDark>
          <IconButton $w={10} aria-label="Minimize view"><Icon name="minimize" size={6} /></IconButton>
          <IconButton $w={11} aria-label="Restore view"><Icon name="restore" size={7} /></IconButton>
        </DocDark>
      </DocControls>
      <CubeHolder><ViewCube /></CubeHolder>
      <NavBar>
        <NavCorner $h={8} aria-label="Close navigation bar"><NavIcon name="dot" size={6} /></NavCorner>
        <NavButton $h={18} aria-label="Full navigation wheel"><NavIcon name="wheel" size={13} /></NavButton>
        <NavCaret />
        <NavRule />
        <NavButton $h={18} aria-label="Pan"><NavIcon name="hand" /></NavButton>
        <NavButton $h={16} aria-label="Zoom"><NavIcon name="zoom" /></NavButton>
        <NavCaret />
        <NavButton $h={17} aria-label="Orbit"><NavIcon name="orbit" size={13} /></NavButton>
        <NavCaret />
        <NavButton $h={17} aria-label="Look at"><NavIcon name="look" /></NavButton>
        <NavCorner $h={9} aria-label="Navigation options"><NavIcon name="dot" size={6} /></NavCorner>
      </NavBar>
      <TriadHolder><Triad /></TriadHolder>
    </Viewport>
  );
}

/* ---------- app ---------- */

type Quick = [icon: string, label: string, w: number];
const fileTools: Quick[] = [
  ["newFile", "New", 17], ["", "New options", 5], ["open", "Open", 12], ["save", "Save", 12], ["undo", "Undo", 14], ["", "Undo list", 5],
  ["redo", "Redo", 13], ["", "Redo list", 6],
];
const viewTools: Quick[] = [
  ["home", "Home", 14], ["sheets", "Sheets", 12], ["branch", "Design view", 12], ["", "Design view list", 6],
  ["region", "Select", 13], ["", "Select list", 5], ["spheres", "Appearance", 13], ["gear", "Settings", 12],
];
const tabs: [string, number][] = [
  ["Sketch", 30], ["Annotate", 35], ["Inspect", 31], ["Tools", 24], ["Manage", 34], ["View", 21], ["Environments", 50], ["Collaborate", 41], ["Fusion", 30],
];

function QuickTools({ tools }: { tools: Quick[] }) {
  return tools.map(([icon, label, w]) => (
    <IconButton key={label} $w={w} aria-label={label}>{icon ? <Icon name={icon} /> : <Caret />}</IconButton>
  ));
}

export default function App() {
  return (
    <Window>
      <GlobalStyle />
      <TitleBar>
        <AppButton aria-label="Inventor">I</AppButton>
        <QuickTools tools={fileTools} />
        <BarRule />
        <QuickTools tools={viewTools} />
        <Picker $w={51}>
          <PickerSelect aria-label="Material" defaultValue="Generic"><option>Generic</option></PickerSelect><Caret />
        </Picker>
        <IconButton $w={14} aria-label="Appearance browser"><Icon name="wheel" /></IconButton>
        <Picker $w={51}>
          <Icon name="cylinder" />
          <PickerSelect aria-label="Appearance style" defaultValue="Default"><option>Default</option></PickerSelect><Caret />
        </Picker>
        <IconButton $w={13} aria-label="Adjust"><Icon name="wheelPick" /></IconButton>
        <IconButton $w={12} aria-label="Clear"><Icon name="wheelX" /></IconButton>
        <IconButton $w={13} aria-label="Parameters"><FormulaMark>fx</FormulaMark></IconButton>
        <IconButton $w={12} aria-label="Add" disabled><Icon name="plus" size={7} /></IconButton>
        <IconButton $w={9} aria-label="Customize"><Icon name="menuDown" size={6} /></IconButton>
        <Title><span>Autodesk Inventor Professional 2026</span><span>Part1</span></Title>
        <IconButton $w={7} aria-label="Expand search">▸</IconButton>
        <SearchBox aria-label="Search" placeholder="Search Help &amp; Commands..." />
        <UserButton><Icon name="user" size={8} />phi.dodat<Caret /></UserButton>
        <IconButton $w={18} aria-label="Store"><Icon name="cart" size={8} /></IconButton>
        <IconButton $w={16} aria-label="Help"><HelpMark>?</HelpMark></IconButton>
        <IconButton $w={5} aria-label="Help options"><Caret /></IconButton>
        <WindowControls>
          <IconButton $w={13} aria-label="Minimize"><Icon name="minimize" size={6} /></IconButton>
          <IconButton $w={13} aria-label="Restore"><Icon name="restore" size={7} /></IconButton>
          <IconButton $w={13} aria-label="Close"><Icon name="close" size={8} /></IconButton>
        </WindowControls>
      </TitleBar>
      <Tabs>
        <Tab $w={25} $kind="file">File</Tab>
        <Tab $w={36} $kind="active">3D Model</Tab>
        {tabs.map(([label, w]) => <Tab key={label} $w={w}>{label}</Tab>)}
        <IconButton $w={34} aria-label="Tab options"><Icon name="tabMenu" size={8} /><Caret /></IconButton>
      </Tabs>
      <Ribbon />
      <Work>
        <ModelBrowser />
        <Canvas />
      </Work>
    </Window>
  );
}
